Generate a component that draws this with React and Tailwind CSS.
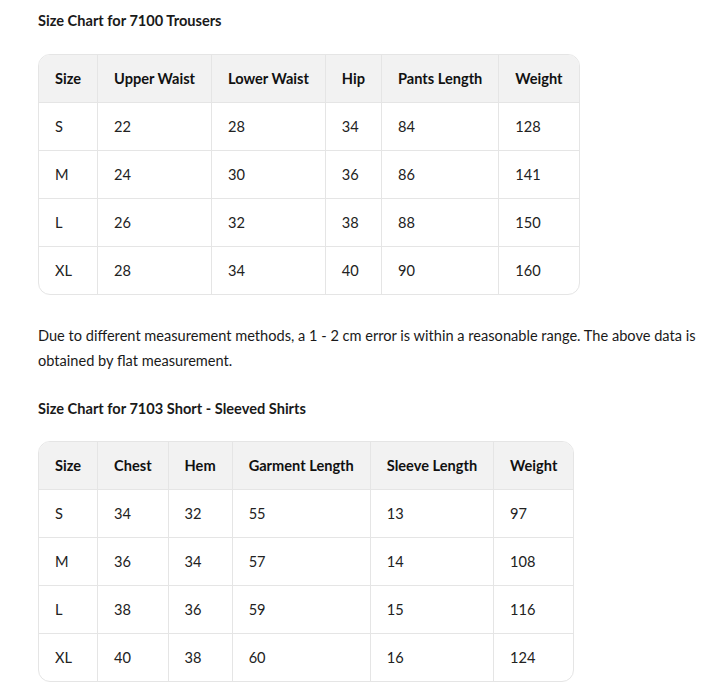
import React from "react";

const t1 = {
  head: ["Size", "Upper Waist", "Lower Waist", "Hip", "Pants Length", "Weight"],
  rows: [
    ["S", "22", "28", "34", "84", "128"],
    ["M", "24", "30", "36", "86", "141"],
    ["L", "26", "32", "38", "88", "150"],
    ["XL", "28", "34", "40", "90", "160"],
  ],
};
const t2 = {
  head: ["Size", "Chest", "Hem", "Garment Length", "Sleeve Length", "Weight"],
  rows: [
    ["S", "34", "32", "55", "13", "97"],
    ["M", "36", "34", "57", "14", "108"],
    ["L", "38", "36", "59", "15", "116"],
    ["XL", "40", "38", "60", "16", "124"],
  ],
};

function Table({ data }) {
  const n = data.head.length;
  return (
    <div className="w-fit rounded-xl border border-[#e5e5e5] overflow-hidden">
      <table className="border-separate border-spacing-0 text-left">
        <thead>
          <tr className="bg-[#f2f2f2]">
            {data.head.map((h, i) => (
              <th
                key={h}
                className={
                  "px-4 py-3 leading-[23px] font-bold text-[14.6px] text-[#111] whitespace-nowrap border-b border-[#e5e5e5] " +
                  (i < n - 1 ? "border-r" : "")
                }
              >
                {h}
              </th>
            ))}
          </tr>
        </thead>
        <tbody>
          {data.rows.map((r, ri) => (
            <tr key={ri}>
              {r.map((c, i) => (
                <td
                  key={i}
                  className={
                    "px-4 py-3 leading-[23px] text-[14.6px] text-[#222] border-[#e5e5e5] " +
                    (i < n - 1 ? "border-r " : "") +
                    (ri < data.rows.length - 1 ? "border-b" : "")
                  }
                >
                  {c}
                </td>
              ))}
            </tr>
          ))}
        </tbody>
      </table>
    </div>
  );
}

export default function App() {
  return (
    <div
      className="bg-white min-h-[690px] pl-[38px] pr-[6px] pt-[9px] text-[#1a1a1a]"
      style={{ fontFamily: 'Lato, sans-serif' }}
    >
      <h2 className="text-[14.6px] leading-[24px] font-bold">Size Chart for 7100 Trousers</h2>
      <div className="mt-[21px]">
        <Table data={t1} />
      </div>
      <p className="mt-[28px] text-[14.6px] leading-[25px]">
        Due to different measurement methods, a 1 - 2 cm error is within a reasonable range. The above data is obtained by flat measurement.
      </p>
      <h2 className="mt-[24px] text-[14.6px] leading-[24px] font-bold">Size Chart for 7103 Short - Sleeved Shirts</h2>
      <div className="mt-[20px]">
        <Table data={t2} />
      </div>
    </div>
  );
}
